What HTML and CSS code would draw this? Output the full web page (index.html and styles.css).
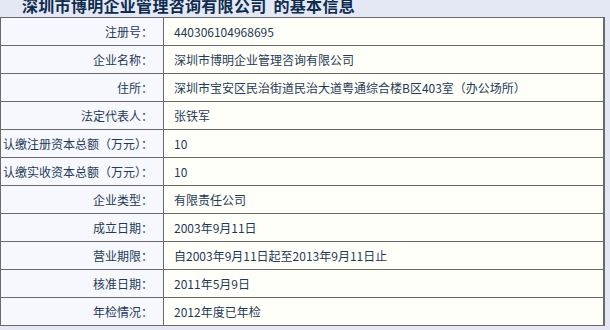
FILE: index.html
```html
<!DOCTYPE html>
<html lang="zh">
<head>
<meta charset="utf-8">
<link rel="stylesheet" href="styles.css">
</head>
<body>
<div class="page">
  <h1 class="title">深圳市博明企业管理咨询有限公司<span class="gap"></span>的基本信息</h1>
  <table class="info">
    <tr><th>注册号：</th><td>440306104968695</td></tr>
    <tr><th>企业名称：</th><td>深圳市博明企业管理咨询有限公司</td></tr>
    <tr><th>住所：</th><td>深圳市宝安区民治街道民治大道粤通综合楼B区403室（办公场所）</td></tr>
    <tr><th>法定代表人：</th><td>张铁军</td></tr>
    <tr><th>认缴注册资本总额（万元）：</th><td>10</td></tr>
    <tr><th>认缴实收资本总额（万元）：</th><td>10</td></tr>
    <tr><th>企业类型：</th><td>有限责任公司</td></tr>
    <tr><th>成立日期：</th><td>2003年9月11日</td></tr>
    <tr><th>营业期限：</th><td>自2003年9月11日起至2013年9月11日止</td></tr>
    <tr><th>核准日期：</th><td>2011年5月9日</td></tr>
    <tr><th>年检情况：</th><td>2012年度已年检</td></tr>
  </table>
</div>
</body>
</html>
```
FILE: styles.css
```css
html, body {
  margin: 0;
  padding: 0;
  background: #e4e8f5;
  font-family: "Noto Sans CJK SC", "Noto Sans", sans-serif;
}
.page {
  width: 610px;
  height: 330px;
  overflow: hidden;
}
.title {
  margin: -5px 0 0 22px;
  height: 22px;
  font-size: 16px;
  line-height: 20px;
  font-weight: bold;
  letter-spacing: 0.3px;
  color: #0e2c4e;
  white-space: nowrap;
}
.gap {
  display: inline-block;
  width: 7px;
}
.info {
  border-collapse: collapse;
  width: 605px;
  border: 1px solid #6a6a6a;
  border-right: 2px solid #6a6a6a;
  font-size: 12px;
  color: #1f3a56;
}
.info tr {
  height: 28px;
}
.info th, .info td {
  border: 1px solid #6a6a6a;
  padding: 0;
  font-weight: normal;
  white-space: nowrap;
  height: 27px;
}
.info th {
  width: 152px;
  text-align: right;
  padding-right: 10px;
  background: #f6f8fe;
}
.info td {
  text-align: left;
  padding-left: 10px;
  background: #fffffa;
}
```
